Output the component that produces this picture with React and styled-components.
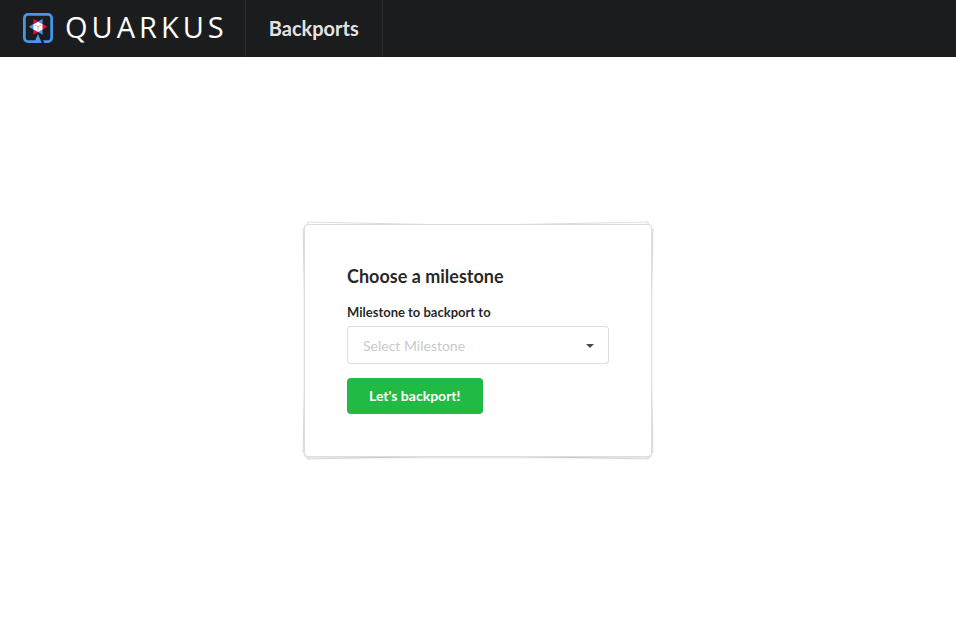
import React from 'react';
import styled, { createGlobalStyle } from 'styled-components';

const GlobalStyle = createGlobalStyle`
  *, *::before, *::after { box-sizing: border-box; }
  html, body { margin: 0; padding: 0; }
  body {
    background: #fff;
    color: rgba(0, 0, 0, 0.87);
    font-family: Lato, "Liberation Sans", sans-serif;
    font-size: 14px;
    line-height: 20px;
  }
`;

const Page = styled.div`
  display: flex;
  flex-direction: column;
  min-height: 100vh;
`;

const MenuBar = styled.nav`
  display: flex;
  flex: none;
  min-height: 57px;
  background: #1b1c1d;
`;

const MenuItem = styled.a`
  display: flex;
  align-items: center;
  padding: 0 23px 2px;
  border-right: 1px solid rgba(255, 255, 255, 0.08);
  color: rgba(255, 255, 255, 0.9);
  font-size: 20px;
  font-weight: 700;
  line-height: 24px;
  text-decoration: none;
`;

const Brand = styled(MenuItem)`
  padding-right: 17px;
`;

const LogoMark = styled.svg`
  display: block;
  width: 30px;
  height: 30px;
  margin-right: 12px;
`;

const LogoText = styled.span`
  padding-bottom: 2px;
  color: #fff;
  font-family: "Open Sans", "Noto Sans", sans-serif;
  font-size: 29px;
  font-weight: 400;
  line-height: 40px;
  letter-spacing: 4px;
`;

const Main = styled.main`
  display: flex;
  flex: 1;
  align-items: center;
  justify-content: center;
  padding: 0 16px 6px;
`;

const PiledCard = styled.form`
  position: relative;
  z-index: 0;
  width: 100%;
  max-width: 348px;

  &::before,
  &::after {
    content: '';
    position: absolute;
    z-index: -1;
    inset: 1px;
    background: #fff;
    border: 1px solid rgba(34, 36, 38, 0.15);
  }
  &::before { transform: rotate(-1.2deg); }
  &::after { transform: rotate(1.2deg); }
`;

const CardBody = styled.div`
  display: flex;
  flex-direction: column;
  align-items: flex-start;
  padding: 40px 42px 42px;
  background: #fff;
  border: 1px solid rgba(34, 36, 38, 0.15);
  border-radius: 4px;
  box-shadow: 0 1px 2px 0 rgba(34, 36, 38, 0.15);
`;

const Title = styled.h3`
  margin: 0 0 14px;
  font-size: 18px;
  font-weight: 700;
  line-height: 23px;
`;

const Label = styled.label`
  margin-bottom: 4px;
  font-size: 13px;
  font-weight: 700;
  line-height: 20px;
`;

const SelectField = styled.div`
  display: grid;
  align-items: center;
  width: 100%;
  margin-bottom: 14px;

  > * { grid-area: 1 / 1; }
`;

const Select = styled.select`
  width: 100%;
  height: 38px;
  padding: 2px 32px 0 15px;
  appearance: none;
  background: #fff;
  border: 1px solid rgba(34, 36, 38, 0.15);
  border-radius: 4px;
  color: rgba(191, 191, 191, 0.87);
  font: inherit;
`;

const Caret = styled.svg`
  justify-self: end;
  width: 8px;
  height: 4px;
  margin: 2px 15px 0 0;
  pointer-events: none;
`;

const SubmitButton = styled.button`
  height: 36px;
  padding: 0 22px;
  background: #21ba45;
  border: 0;
  border-radius: 4px;
  color: #fff;
  font: inherit;
  font-weight: 700;
  cursor: pointer;
`;

function QuarkusMark() {
  return (
    <LogoMark viewBox="0 0 24 24" aria-hidden="true">
      <path
        fill="#4695eb"
        d="M3.98 0A3.99 3.99 0 0 0 0 3.98v16.04A3.99 3.99 0 0 0 3.98 24h10.98L12 16.6l-2.2 5.1H4a1.8 1.8 0 0 1-1.8-1.8V4A1.8 1.8 0 0 1 4 2.2h16A1.8 1.8 0 0 1 21.8 4v15.9a1.8 1.8 0 0 1-1.8 1.8h-3.9L17.03 24h2.99A3.99 3.99 0 0 0 24 20.02V3.98A3.99 3.99 0 0 0 20.02 0z"
      />
      <path fill="#ff004a" d="M8.2 4.6 12 6.8 8.5 9.4zM19.4 11l-4.2 2.6V8.4zM8.2 17.4l.3-4.9 3.5 2.6z" />
      <path fill="#4695eb" d="M15.8 4.6 15.5 9.4 12 6.8zM4.6 11l4.2-2.6v5.2zM15.8 17.4 12 15.1l3.5-2.6z" />
      <path fill="#fff" d="m12 6.9 3.6 2v4.2L12 15.1l-3.6-2V8.9z" />
      <path fill="none" stroke="#858b94" strokeWidth="0.5" d="m9.6 9.7 2.4 1.2 2.4-1.2M12 10.9v3.2" />
    </LogoMark>
  );
}

export default function App() {
  return (
    <>
      <GlobalStyle />
      <Page>
        <MenuBar>
          <Brand href="#home">
            <QuarkusMark />
            <LogoText>QUARKUS</LogoText>
          </Brand>
          <MenuItem href="#backports">Backports</MenuItem>
        </MenuBar>
        <Main>
          <PiledCard onSubmit={(event) => event.preventDefault()}>
            <CardBody>
              <Title>Choose a milestone</Title>
              <Label htmlFor="milestone">Milestone to backport to</Label>
              <SelectField>
                <Select id="milestone" defaultValue="">
                  <option value="">Select Milestone</option>
                </Select>
                <Caret viewBox="0 0 8 4" aria-hidden="true">
                  <path fill="#4a4a4a" d="M0 0h8L4 4z" />
                </Caret>
              </SelectField>
              <SubmitButton type="submit">Let's backport!</SubmitButton>
            </CardBody>
          </PiledCard>
        </Main>
      </Page>
    </>
  );
}
